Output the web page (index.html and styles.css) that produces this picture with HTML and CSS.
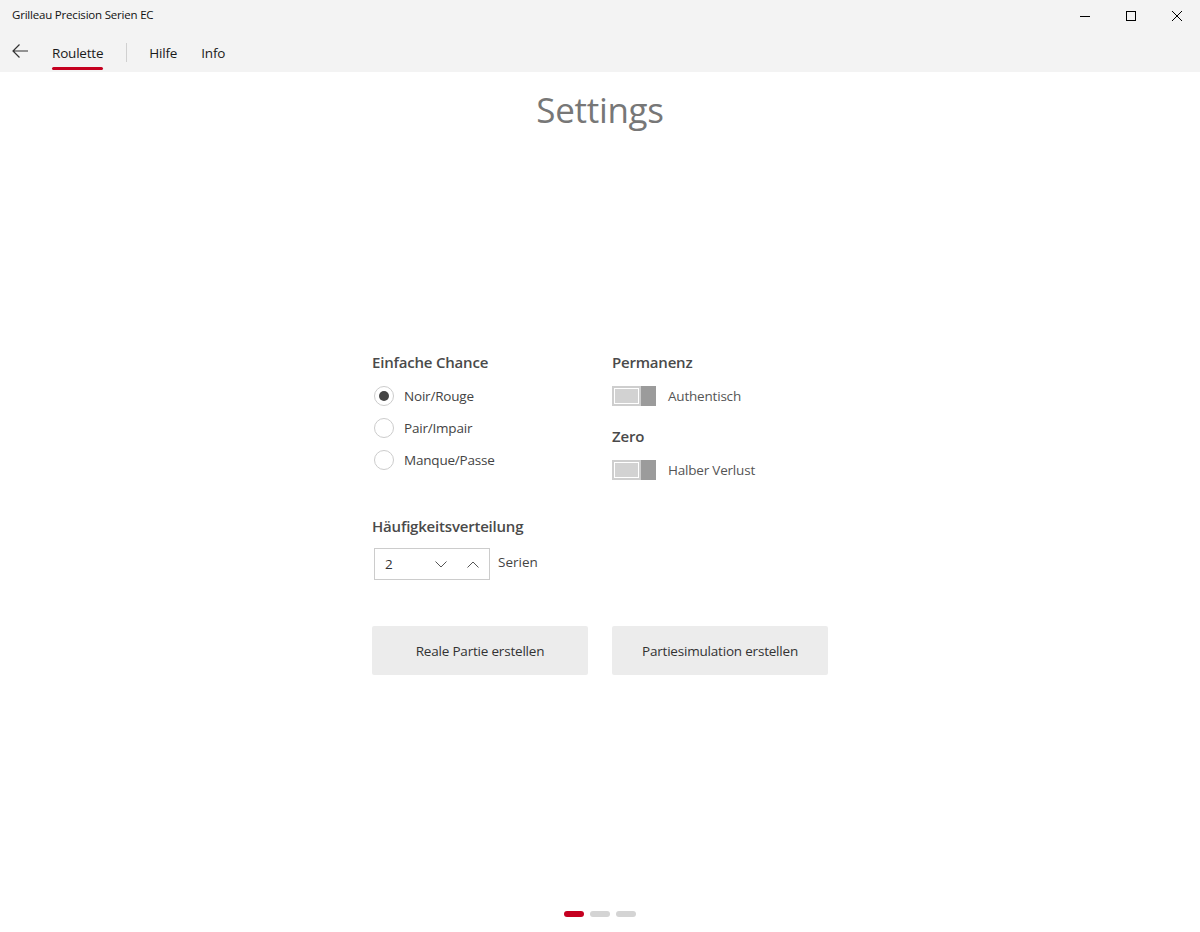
FILE: index.html
```html
<!DOCTYPE html>
<html lang="de">
<head>
    <meta charset="UTF-8">
    <title>Grilleau Precision Serien EC</title>
    <link rel="stylesheet" href="styles.css">
</head>
<body>
    <div class="top">
        <div class="titlebar">
            <span class="app-title">Grilleau Precision Serien EC</span>
            <div class="window-buttons">
                <span class="win-btn"><svg width="10" height="10" viewBox="0 0 10 10"><path d="M0 5.5h10" stroke="#000" stroke-width="1"/></svg></span>
                <span class="win-btn"><svg width="10" height="10" viewBox="0 0 10 10"><rect x="0.5" y="0.5" width="9" height="9" fill="none" stroke="#000" stroke-width="1"/></svg></span>
                <span class="win-btn"><svg width="10" height="10" viewBox="0 0 10 10"><path d="M0 0L10 10M10 0L0 10" stroke="#000" stroke-width="1"/></svg></span>
            </div>
        </div>
        <div class="navbar">
            <span class="back"><svg width="16" height="14" viewBox="0 0 16 14"><path d="M16 7H1M7.5 0.5L1 7l6.5 6.5" fill="none" stroke="#333" stroke-width="1.2"/></svg></span>
            <a class="nav-item active">Roulette</a>
            <span class="nav-sep"></span>
            <a class="nav-item">Hilfe</a>
            <a class="nav-item">Info</a>
        </div>
    </div>

    <h1 class="page-title">Settings</h1>

    <div class="settings">
        <div class="row">
            <div class="col">
                <h3>Einfache Chance</h3>
                <label class="radio checked"><span class="dot"></span>Noir/Rouge</label>
                <label class="radio"><span class="dot"></span>Pair/Impair</label>
                <label class="radio"><span class="dot"></span>Manque/Passe</label>
            </div>
            <div class="col">
                <h3>Permanenz</h3>
                <div class="toggle-row"><span class="toggle"><span class="track"></span><span class="thumb"></span></span>Authentisch</div>
                <h3 class="sub">Zero</h3>
                <div class="toggle-row"><span class="toggle"><span class="track"></span><span class="thumb"></span></span>Halber Verlust</div>
            </div>
        </div>

        <h3 class="freq">Häufigkeitsverteilung</h3>
        <div class="spin-row">
            <div class="spinner">
                <span class="value">2</span>
                <svg class="chev" width="12" height="7" viewBox="0 0 12 7"><path d="M0.5 0.5L6 6L11.5 0.5" fill="none" stroke="#555" stroke-width="1"/></svg>
                <svg class="chev" width="12" height="7" viewBox="0 0 12 7"><path d="M0.5 6.5L6 1L11.5 6.5" fill="none" stroke="#555" stroke-width="1"/></svg>
            </div>
            <span class="spin-label">Serien</span>
        </div>

        <div class="actions">
            <button>Reale Partie erstellen</button>
            <button>Partiesimulation erstellen</button>
        </div>
    </div>

    <div class="pager">
        <span class="pip on"></span>
        <span class="pip"></span>
        <span class="pip"></span>
    </div>
</body>
</html>
```

FILE: styles.css
```css
body {
    margin: 0;
    font-family: 'Open Sans', 'Noto Sans', sans-serif;
    background-color: #fff;
    color: #333;
    height: 932px;
    position: relative;
}
.top {
    background-color: #f3f3f3;
    height: 72px;
}
.titlebar {
    height: 32px;
    display: flex;
    align-items: center;
    justify-content: space-between;
}
.app-title {
    font-size: 11.5px;
    color: #111;
    padding-left: 12px;
    padding-bottom: 4px;
    letter-spacing: -0.2px;
}
.window-buttons {
    display: flex;
}
.win-btn {
    width: 46px;
    height: 32px;
    display: flex;
    align-items: center;
    justify-content: center;
}
.navbar {
    height: 40px;
    display: flex;
    align-items: center;
}
.back {
    width: 16px;
    padding-left: 12px;
    margin-right: 24px;
    display: flex;
    margin-top: -2px;
}
.nav-item {
    font-size: 13.5px;
    color: #1a1a1a;
    margin-right: 24px;
    position: relative;
    letter-spacing: -0.2px;
    margin-top: 2px;
}
.nav-item.active::after {
    content: '';
    position: absolute;
    left: 0;
    right: 0;
    bottom: -8px;
    height: 3px;
    border-radius: 2px;
    background-color: #c50020;
}
.nav-sep {
    width: 1px;
    height: 19px;
    background-color: #d0d0d0;
    margin-right: 22px;
    margin-left: -1px;
}
.page-title {
    margin: 14px 0 0;
    text-align: center;
    font-size: 35px;
    font-weight: normal;
    color: #777;
    letter-spacing: -0.3px;
}
.settings {
    width: 456px;
    margin: 219px auto 0;
}
.row {
    display: flex;
    gap: 24px;
}
.col {
    width: 216px;
}
h3 {
    margin: 0 0 8px;
    font-size: 15px;
    line-height: 20px;
    font-weight: 600;
    color: #4a4a4a;
    letter-spacing: -0.2px;
}
h3.sub {
    margin-top: 14px;
}
.radio {
    display: flex;
    align-items: center;
    height: 32px;
    font-size: 13.5px;
    color: #444;
    letter-spacing: -0.2px;
}
.dot {
    width: 18px;
    height: 18px;
    border: 1px solid #ccc;
    border-radius: 50%;
    margin: 0 10px 0 2px;
    position: relative;
}
.radio.checked .dot::after {
    content: '';
    position: absolute;
    left: 4px;
    top: 4px;
    width: 10px;
    height: 10px;
    border-radius: 50%;
    background-color: #444;
}
.toggle-row {
    display: flex;
    align-items: center;
    font-size: 13.5px;
    color: #555;
    height: 32px;
    letter-spacing: -0.2px;
}
.toggle {
    display: flex;
    width: 44px;
    height: 20px;
    margin-right: 12px;
}
.track {
    width: 25px;
    border: 2px solid #cecece;
    background-color: #d2d2d2;
    box-shadow: inset 0 0 0 1px #fff;
}
.thumb {
    width: 15px;
    background-color: #9b9b9b;
}
.freq {
    margin-top: 30px;
    margin-bottom: 12px;
}
.spin-row {
    display: flex;
    align-items: center;
}
.spinner {
    margin-left: 2px;
    width: 114px;
    height: 30px;
    border: 1px solid #ccc;
    display: flex;
    align-items: center;
    font-size: 13.5px;
    color: #333;
}
.spinner .value {
    padding-left: 10px;
    width: 50px;
    flex-shrink: 0;
}
.chev {
    flex-shrink: 0;
    margin-right: 20px;
}
.spinner .chev:last-child {
    margin-right: 0;
}
.spin-label {
    margin-left: 8px;
    margin-top: -4px;
    font-size: 13.5px;
    color: #444;
}
.actions {
    display: flex;
    gap: 24px;
    margin-top: 46px;
}
.actions button {
    width: 216px;
    height: 49px;
    border: none;
    border-radius: 2px;
    background-color: #ececec;
    font-family: inherit;
    font-size: 13.5px;
    color: #333;
    letter-spacing: -0.2px;
}
.pager {
    position: absolute;
    left: 0;
    right: 0;
    top: 911px;
    display: flex;
    justify-content: center;
    gap: 6px;
}
.pip {
    width: 20px;
    height: 6px;
    border-radius: 3px;
    background-color: #d4d4d4;
}
.pip.on {
    background-color: #c50020;
}
```
